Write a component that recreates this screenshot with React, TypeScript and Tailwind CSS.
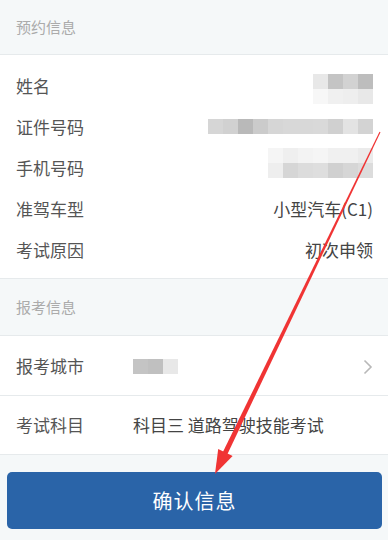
import React from 'react';

const nameCells = [
  ['#e8e8e8', '#c4c4c4', '#d2d2d2', '#bdbdbd'],
  ['#f7f7f7', '#f0f0f0', '#eeeeee', '#e8e8e8'],
];
const idCells = [
  ['#d6d6d6', '#d1d1d1', '#b9b9b9', '#cbcbcb', '#d6d6d6', '#d8d8d8', '#d8d8d8', '#d9d9d9', '#d0d0d0', '#e3e3e3', '#d3d3d3'],
];
const phoneCells = [
  ['#f5f5f5', '#efefef', '#f3f3f3', '#f5f5f5', '#f0f0f0', '#f0f0f0', '#ebebeb'],
  ['#eeeeee', '#d6d6d6', '#dcdcdc', '#dedede', '#d0d0d0', '#d6d6d6', '#dcdcdc'],
];
const cityCells = [['#c4c4c4', '#c0c0c0', '#e8e8e8']];

// pixelated mosaic that hides personal data
const Mosaic = ({ cells, className = '' }: { cells: string[][]; className?: string }) => (
  <div className={`flex flex-col ${className}`}>
    {cells.map((row, i) => (
      <div key={i} className="flex">
        {row.map((c, j) => (
          <div key={j} className="w-[15px] h-[15px]" style={{ backgroundColor: c }} />
        ))}
      </div>
    ))}
  </div>
);

const SectionHeader = ({ title, tall }: { title: string; tall?: boolean }) => (
  <div
    className={`flex items-center px-4 bg-[#f5f8f9] border-b border-[#e6eaec] text-[15px] text-[#ababab] ${
      tall ? 'h-[57px]' : 'h-[55px]'
    }`}
  >
    {title}
  </div>
);

const InfoRow = ({ label, children }: { label: string; children: React.ReactNode }) => (
  <div className="flex items-center justify-between h-[41px] pl-4 pr-[15px]">
    <span className="text-[17px] text-[#555555]">{label}</span>
    {children}
  </div>
);

export default function App() {
  return (
    <div
      className="relative w-[388px] h-[540px] bg-[#f5f8f9] overflow-hidden"
      style={{ fontFamily: '"Noto Sans CJK SC", "Noto Sans", sans-serif' }}
    >
      <SectionHeader title="预约信息" />
      <div className="bg-white pt-[10px] pb-[8px] border-b border-[#e6eaec]">
        <InfoRow label="姓名">
          <Mosaic cells={nameCells} className="mt-[7px]" />
        </InfoRow>
        <InfoRow label="证件号码">
          <Mosaic cells={idCells} />
        </InfoRow>
        <InfoRow label="手机号码">
          <Mosaic cells={phoneCells} className="mb-[9px]" />
        </InfoRow>
        <InfoRow label="准驾车型">
          <span className="text-[17px] text-[#444444]">小型汽车(C1)</span>
        </InfoRow>
        <InfoRow label="考试原因">
          <span className="text-[17px] text-[#444444]">初次申领</span>
        </InfoRow>
      </div>

      <SectionHeader title="报考信息" tall />
      <div className="bg-white">
        <div className="flex items-center h-[60px] pl-4 pr-[15px] border-b border-[#e6eaec]">
          <span className="w-[117px] text-[17px] text-[#555555]">报考城市</span>
          <Mosaic cells={cityCells} className="mt-[2px]" />
          <svg className="ml-auto mt-[2px]" width="10" height="16" viewBox="0 0 10 16" fill="none">
            <path d="M1.5 1.5 L8 8 L1.5 14.5" stroke="#b8b8b8" strokeWidth="1.6" />
          </svg>
        </div>
        <div className="flex items-center h-[59px] pl-4 pr-[15px] border-b border-[#e6eaec]">
          <span className="w-[117px] text-[17px] text-[#555555]">考试科目</span>
          <span className="text-[17px] text-[#444444]">科目三 道路驾驶技能考试</span>
        </div>
      </div>

      <div className="pt-[17px] px-[7px]">
        <button className="w-[375px] h-[57px] rounded-[5px] bg-[#2a64a8] text-white text-[20px] tracking-[1px]">
          确认信息
        </button>
      </div>

      {/* red annotation arrow drawn over the screenshot */}
      <svg className="absolute inset-0 pointer-events-none" width="388" height="540" viewBox="0 0 388 540">
        <polygon points="380.5,132.2 379.5,131.8 222.4,453.1 226.9,455.3" fill="#f03434" />
        <polygon points="215,474 218.2,448.9 232.6,455.9" fill="#f03434" />
      </svg>
    </div>
  );
}
